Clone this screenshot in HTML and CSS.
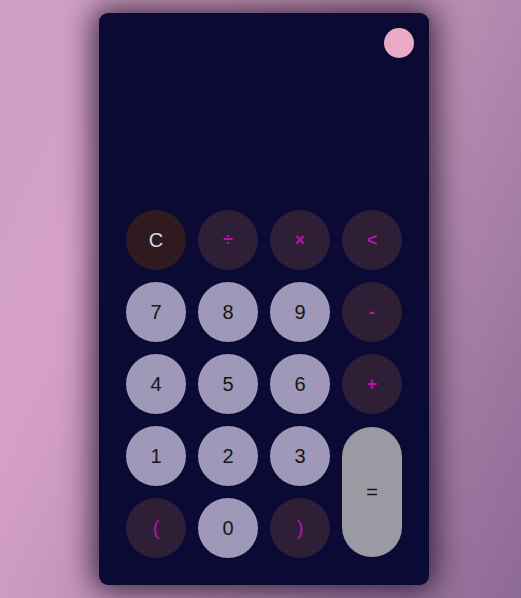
FILE: index.html
```html
<!DOCTYPE html>
<html>
<head>
<meta charset="utf-8">
<link rel="stylesheet" href="styles.css">
</head>
<body>
<div class="page">
  <div class="calc">
    <div class="top">
      <div class="toggle"></div>
    </div>
    <div class="display"></div>
    <div class="keys">
      <button class="key clear">C</button>
      <button class="key op">÷</button>
      <button class="key op">×</button>
      <button class="key op">&lt;</button>
      <button class="key num">7</button>
      <button class="key num">8</button>
      <button class="key num">9</button>
      <button class="key op">-</button>
      <button class="key num">4</button>
      <button class="key num">5</button>
      <button class="key num">6</button>
      <button class="key op">+</button>
      <button class="key num">1</button>
      <button class="key num">2</button>
      <button class="key num">3</button>
      <button class="key equals">=</button>
      <button class="key paren">(</button>
      <button class="key num">0</button>
      <button class="key paren">)</button>
    </div>
  </div>
</div>
</body>
</html>
```
FILE: styles.css
```css
html, body {
  margin: 0;
  padding: 0;
  height: 100%;
}
body {
  background: linear-gradient(115deg, #cd9fc2 0%, #d6a1c8 25%, #b88bb1 60%, #8d6a95 100%);
  font-family: "Liberation Sans", Arial, sans-serif;
}
.page {
  box-sizing: border-box;
  height: 100%;
  padding-left: 7px;
  display: flex;
  justify-content: center;
  align-items: center;
}
.calc {
  box-sizing: border-box;
  width: 330px;
  height: 572px;
  background: #0b0a35;
  border-radius: 9px;
  box-shadow: 0 0 30px 6px rgba(15, 5, 25, 0.75);
  padding: 15px;
  display: flex;
  flex-direction: column;
}
.top {
  display: flex;
  justify-content: flex-end;
}
.toggle {
  width: 30px;
  height: 30px;
  border-radius: 50%;
  background: #e9aac5;
}
.display {
  flex: 1;
}
.keys {
  padding: 12px;
  display: grid;
  grid-template-columns: repeat(4, 60px);
  grid-auto-rows: 60px;
  gap: 12px;
}
.key {
  border: none;
  margin: 0;
  padding: 0;
  width: 60px;
  height: 60px;
  border-radius: 30px;
  font-family: "Liberation Sans", Arial, sans-serif;
  font-size: 20px;
  display: flex;
  align-items: center;
  justify-content: center;
}
.num {
  background: #9f98b8;
  color: #161616;
}
.op {
  background: #2e1f37;
  color: #b414a8;
  font-weight: bold;
  font-size: 18px;
}
.paren {
  background: #2e1f37;
  color: #b414a8;
}
.clear {
  background: #2e1a1f;
  color: #cbdcf3;
}
.equals {
  grid-column: 4;
  grid-row: 4 / span 2;
  height: 130px;
  align-self: center;
  background: #9b9aa3;
  color: #161616;
}
```
